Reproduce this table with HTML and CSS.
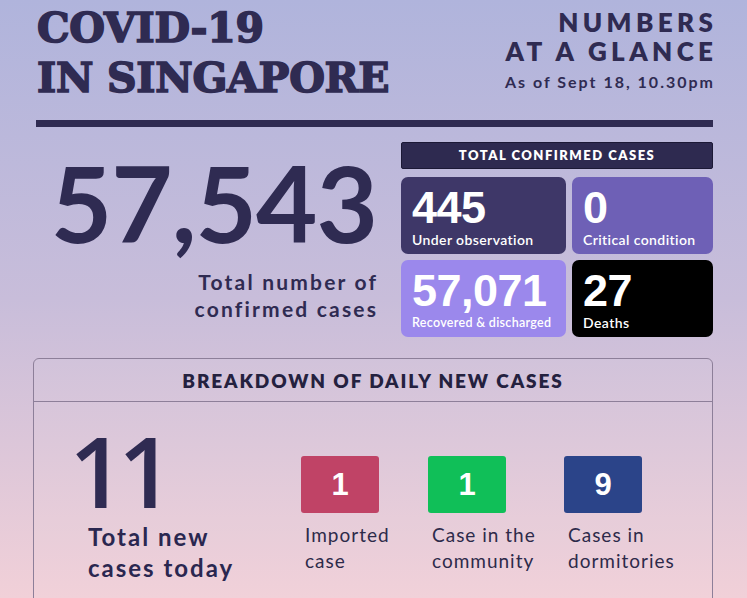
FILE: index.html
```html
<!DOCTYPE html>
<html lang="en">
<head>
<meta charset="utf-8">
<title>COVID-19 in Singapore</title>
<link rel="stylesheet" href="styles.css">
</head>
<body>
<div class="page">
  <header class="top">
    <h1 class="title">COVID-19<br>IN SINGAPORE</h1>
    <div class="glance">
      <div class="glance-title">NUMBERS<br>AT A GLANCE</div>
      <div class="glance-date">As of Sept 18, 10.30pm</div>
    </div>
  </header>
  <div class="rule"></div>
  <section class="summary">
    <div class="total">
      <div class="total-num">57,543</div>
      <div class="total-label">Total number of<br>confirmed cases</div>
    </div>
    <div class="confirmed">
      <div class="bar">TOTAL CONFIRMED CASES</div>
      <div class="cards">
        <div class="card card-obs"><div class="card-num">445</div><div class="card-label">Under observation</div></div>
        <div class="card card-crit"><div class="card-num">0</div><div class="card-label">Critical condition</div></div>
        <div class="card card-rec"><div class="card-num">57,071</div><div class="card-label small">Recovered &amp; discharged</div></div>
        <div class="card card-dead"><div class="card-num">27</div><div class="card-label">Deaths</div></div>
      </div>
    </div>
  </section>
  <section class="breakdown">
    <div class="bd-head">BREAKDOWN OF DAILY NEW CASES</div>
    <div class="bd-body">
      <div class="today">
        <div class="today-num">11</div>
        <div class="today-label">Total new<br>cases today</div>
      </div>
      <div class="types">
        <div class="type">
          <div class="sq sq-imp">1</div>
          <div class="type-label">Imported<br>case</div>
        </div>
        <div class="type">
          <div class="sq sq-com">1</div>
          <div class="type-label">Case in the<br>community</div>
        </div>
        <div class="type">
          <div class="sq sq-dorm">9</div>
          <div class="type-label">Cases in<br>dormitories</div>
        </div>
      </div>
    </div>
  </section>
</div>
</body>
</html>
```
FILE: styles.css
```css
* { box-sizing: border-box; }
html, body { margin: 0; padding: 0; }
body { font-family: Lato, "Open Sans", sans-serif; color: #2f2b52; }
.page {
  width: 747px;
  height: 598px;
  overflow: hidden;
  background: linear-gradient(to bottom, #b0b4dc 0%, #c8bdda 50%, #f1d0d8 100%);
}
.top {
  display: flex;
  justify-content: space-between;
  align-items: flex-start;
  padding: 0 34px 0 37px;
}
.title {
  margin: 3px 0 0;
  font-family: "DejaVu Serif", serif;
  font-weight: 700;
  font-size: 41px;
  line-height: 50px;
  color: #2f2b52;
  letter-spacing: -0.3px;
  -webkit-text-stroke: 1.6px #2f2b52;
}
.glance { text-align: right; padding-top: 8px; }
.glance-title {
  font-weight: 800;
  font-size: 26px;
  line-height: 29px;
  letter-spacing: 4.4px;
  margin-right: -4.4px;
}
.glance-date {
  margin-top: 6px;
  font-weight: 700;
  font-size: 16px;
  line-height: 20px;
  letter-spacing: 2px;
  margin-right: -2px;
}
.rule {
  height: 7px;
  margin: 17px 34px 0 36px;
  background: #2f2b52;
}
.summary {
  display: flex;
  gap: 24px;
  padding: 0 34px 0 36px;
  margin-top: 15px;
}
.total {
  flex: 1;
  text-align: right;
  padding-top: 7px;
  padding-right: 1px;
}
.total-num {
  font-weight: 700;
  font-size: 106px;
  line-height: 106px;
  letter-spacing: -1px;
  margin-right: -1px;
}
.total-label {
  margin-top: 13px;
  font-weight: 700;
  font-size: 21px;
  line-height: 27px;
  letter-spacing: 2.2px;
  margin-right: -2.2px;
}
.confirmed { width: 312px; }
.bar {
  height: 27px;
  background: #2e2a50;
  border: 1px solid #1c1936;
  border-radius: 2px;
  color: #fff;
  font-weight: 800;
  font-size: 13px;
  line-height: 25px;
  letter-spacing: 1.5px;
  text-align: center;
}
.cards {
  margin-top: 8px;
  display: grid;
  grid-template-columns: 165px 141px;
  grid-auto-rows: 77px;
  gap: 6px;
}
.card {
  border-radius: 7px;
  color: #fff;
  padding: 8px 6px 0 11px;
  white-space: nowrap;
}
.card-obs { background: #3e3768; }
.card-crit { background: #6e60b6; }
.card-rec { background: #9b88ec; }
.card-dead { background: #000; }
.card-num {
  font-family: "Liberation Sans", Arial, sans-serif;
  font-weight: 700;
  font-size: 45px;
  line-height: 46px;
  letter-spacing: -0.5px;
}
.card-label {
  font-weight: 600;
  font-size: 14px;
  line-height: 17px;
  letter-spacing: 0.4px;
}
.card-label.small { font-size: 12.5px; letter-spacing: 0.3px; }
.breakdown {
  margin: 21px 34px 0 33px;
  height: 300px;
  border: 1px solid #8d7f99;
  border-radius: 6px;
  background: rgba(255, 255, 255, 0.04);
}
.bd-head {
  height: 43px;
  border-bottom: 1px solid #8d7f99;
  text-align: center;
  font-weight: 800;
  font-size: 19px;
  line-height: 43px;
  letter-spacing: 1.9px;
  color: #24213f;
}
.bd-body {
  display: flex;
  padding: 19px 0 0 41px;
}
.today { width: 226px; }
.today-num {
  font-family: "Open Sans", Lato, sans-serif;
  font-weight: 600;
  font-size: 98px;
  line-height: 98px;
  letter-spacing: -7px;
  margin-left: -6px;
}
.today-label {
  margin-top: 2px;
  padding-left: 13px;
  font-weight: 700;
  font-size: 24px;
  line-height: 31px;
  letter-spacing: 2px;
  color: #2a2750;
}
.types {
  display: grid;
  grid-template-columns: 127px 136px auto;
  padding-top: 35px;
}
.sq {
  width: 78px;
  height: 57px;
  border-radius: 3px;
  color: #fff;
  text-align: center;
  font-family: "Liberation Sans", Arial, sans-serif;
  font-weight: 700;
  font-size: 31px;
  line-height: 57px;
}
.sq-imp { background: #c04366; }
.sq-com { background: #10bf58; }
.sq-dorm { background: #2b4489; }
.type-label {
  margin-top: 9px;
  padding-left: 4px;
  font-weight: 400;
  font-size: 19px;
  line-height: 26px;
  letter-spacing: 1px;
  color: #2d2a4a;
}
```
